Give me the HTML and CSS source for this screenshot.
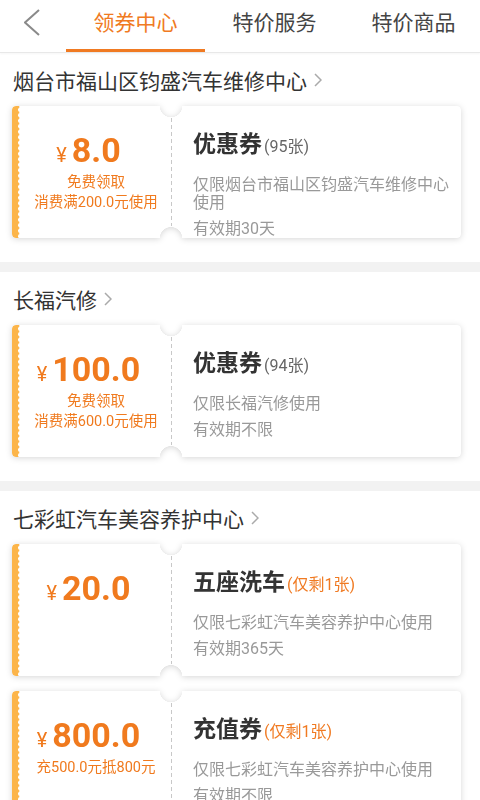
FILE: index.html
```html
<!DOCTYPE html>
<html lang="zh-CN">
<head>
<meta charset="UTF-8">
<meta name="viewport" content="width=device-width, initial-scale=1.0">
<title>领券中心</title>
<link rel="stylesheet" href="styles.css">
</head>
<body>
<div class="header">
  <div class="back">
    <svg width="16" height="27" viewBox="0 0 16 27"><polyline points="15,1 1,13.5 15,26" fill="none" stroke="#8a8a8a" stroke-width="2"/></svg>
  </div>
  <div class="tab active">领券中心</div>
  <div class="tab">特价服务</div>
  <div class="tab">特价商品</div>
</div>

<div class="section">
  <div class="shop">烟台市福山区钧盛汽车维修中心<svg class="arrow" width="8" height="14" viewBox="0 0 8 14"><polyline points="1,1 7,7 1,13" fill="none" stroke="#aaa" stroke-width="1.5"/></svg></div>
  <div class="coupon-wrap">
    <div class="coupon">
      <div class="left">
        <div class="amount"><span class="yen">¥</span>8.0</div>
        <div class="sub">免费领取</div>
        <div class="sub">消费满200.0元使用</div>
      </div>
      <div class="right">
        <div class="title">优惠券<span class="count">(95张)</span></div>
        <div class="desc">仅限烟台市福山区钧盛汽车维修中心使用</div>
        <div class="valid">有效期30天</div>
      </div>
    </div>
  </div>
</div>

<div class="section">
  <div class="shop">长福汽修<svg class="arrow" width="8" height="14" viewBox="0 0 8 14"><polyline points="1,1 7,7 1,13" fill="none" stroke="#aaa" stroke-width="1.5"/></svg></div>
  <div class="coupon-wrap">
    <div class="coupon">
      <div class="left">
        <div class="amount"><span class="yen">¥</span>100.0</div>
        <div class="sub">免费领取</div>
        <div class="sub">消费满600.0元使用</div>
      </div>
      <div class="right">
        <div class="title">优惠券<span class="count">(94张)</span></div>
        <div class="desc">仅限长福汽修使用</div>
        <div class="valid">有效期不限</div>
      </div>
    </div>
  </div>
</div>

<div class="section">
  <div class="shop">七彩虹汽车美容养护中心<svg class="arrow" width="8" height="14" viewBox="0 0 8 14"><polyline points="1,1 7,7 1,13" fill="none" stroke="#aaa" stroke-width="1.5"/></svg></div>
  <div class="coupon-wrap">
    <div class="coupon">
      <div class="left">
        <div class="amount"><span class="yen">¥</span>20.0</div>
      </div>
      <div class="right">
        <div class="title">五座洗车<span class="count hot">(仅剩1张)</span></div>
        <div class="desc">仅限七彩虹汽车美容养护中心使用</div>
        <div class="valid">有效期365天</div>
      </div>
    </div>
  </div>
  <div class="coupon-wrap">
    <div class="coupon">
      <div class="left">
        <div class="amount"><span class="yen">¥</span>800.0</div>
        <div class="sub">充500.0元抵800元</div>
      </div>
      <div class="right">
        <div class="title">充值券<span class="count hot">(仅剩1张)</span></div>
        <div class="desc">仅限七彩虹汽车美容养护中心使用</div>
        <div class="valid">有效期不限</div>
      </div>
    </div>
  </div>
</div>
</body>
</html>
```

FILE: styles.css
```css
body { margin: 0; background: #fff; font-family: Roboto, "Noto Sans CJK SC", sans-serif; color: #333; overflow: hidden; }

.header { display: grid; grid-template-columns: 66px repeat(3, 139px); height: 52px; border-bottom: 1px solid #e8e8e8; box-shadow: 0 1px 2px rgba(0, 0, 0, 0.04); overflow: hidden; }
.back { display: flex; align-items: flex-start; padding: 9px 0 0 24px; }
.tab { position: relative; text-align: center; font-size: 21px; line-height: 46px; color: #444; }
.tab.active { color: #f07a22; }
.tab.active::after { content: ""; position: absolute; left: 0; right: 0; bottom: 0; height: 3px; background: #f07a22; }

.section { padding-bottom: 24px; border-bottom: 10px solid #f2f2f2; }
.shop { display: flex; align-items: center; height: 53px; padding-left: 13px; font-size: 21px; color: #333; }
.arrow { margin-left: 7px; }

.coupon-wrap { margin: 0 19px 15px 12px; filter: drop-shadow(0 1px 3px rgba(0, 0, 0, 0.16)); }
.coupon-wrap:last-child { margin-bottom: 0; }
.coupon {
  display: flex; height: 132px; background: #fff; border-radius: 4px;
  -webkit-mask-image: radial-gradient(circle at 159px 0, transparent 11px, #000 11.5px), radial-gradient(circle at 159px 100%, transparent 11px, #000 11.5px);
  -webkit-mask-size: 100% 51%, 100% 51%;
  -webkit-mask-position: top, bottom;
  -webkit-mask-repeat: no-repeat;
}
.left {
  width: 150px; padding-left: 9px; text-align: center; color: #f07a1e;
  background: radial-gradient(circle at 9px 50%, #fff 2.6px, transparent 3.1px) 0 1px / 9px 5.5px repeat-y, linear-gradient(#fcb54a, #fcb54a) 0 0 / 9px 100% no-repeat;
  border-radius: 4px 0 0 4px;
}
.amount { padding: 24px 15px 0 0; height: 40px; line-height: 40px; font-size: 34px; font-weight: bold; }
.yen { font-size: 20px; font-weight: normal; margin-right: 5px; }
.amount + .sub { margin-top: 3px; }
.sub { font-size: 14.5px; line-height: 20px; }

.right { position: relative; flex: 1; padding: 24px 10px 0 22px; }
.right::before { content: ""; position: absolute; left: 0; top: 12px; bottom: 12px; width: 1px; background: repeating-linear-gradient(#c8c8c8 0 4px, transparent 4px 7px); }
.title { font-size: 23px; font-weight: bold; line-height: 30px; color: #333; }
.count { font-size: 16px; font-weight: normal; color: #666; margin-left: 2px; }
.count.hot { color: #f07a22; }
.desc { margin-top: 14px; font-size: 16px; line-height: 18px; color: #999; }
.valid { margin-top: 8px; font-size: 16px; line-height: 18px; color: #999; }
```
